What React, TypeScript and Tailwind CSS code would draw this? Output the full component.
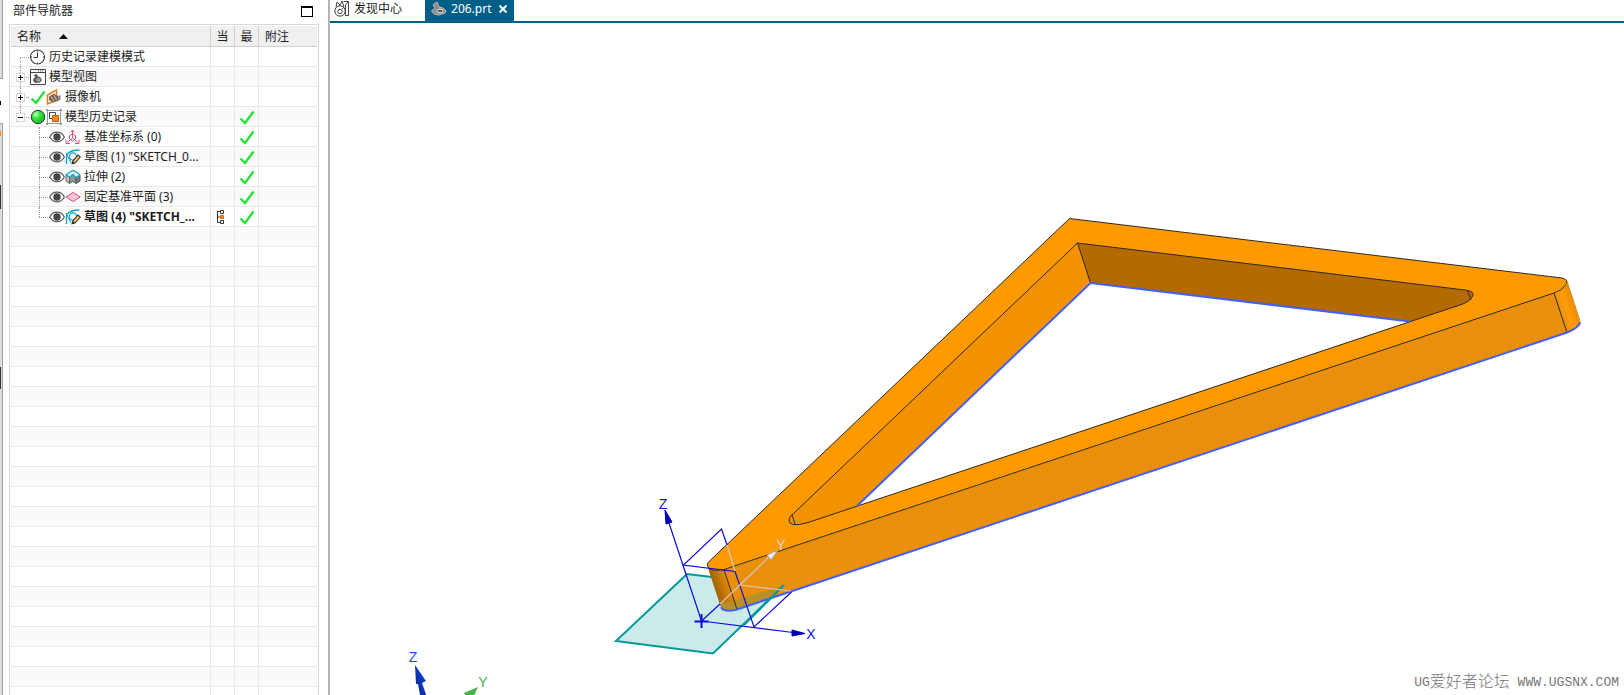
import { ReactNode } from 'react';

type Row = {
  label: string;
  level: number;
  icons: ReactNode[];
  expander?: '+' | '-';
  first?: boolean;
  last?: boolean;
  bold?: boolean;
  current?: boolean;
  checked?: boolean;
};

const IconCheck = () => (
  <svg width="16" height="16" viewBox="0 0 16 16" fill="none">
    <path d="M1.5 9.5L6 14L14.5 2.5" stroke="#22e32f" strokeWidth="2.3" />
  </svg>
);

const IconClock = () => (
  <svg width="16" height="16" viewBox="0 0 16 16" fill="none">
    <circle cx="7.5" cy="8" r="7" fill="#fff" stroke="#444" strokeWidth="1.1" />
    <path
      d="M7.5 3.5V8.5H3.5M7.5 1.5V2.5M7.5 13.5V14.5M13 8H14M1 8H2"
      stroke="#333"
    />
  </svg>
);

const IconModelView = () => (
  <svg width="16" height="16" viewBox="0 0 16 16" fill="none">
    <path d="M0.5 0.5H15.5V15.5H0.5Z" fill="#fff" stroke="#444" />
    <path d="M0 3.5H16" stroke="#444" />
    <path d="M8 2H14" stroke="#444" strokeDasharray="1 1" />
    <path
      d="M4 6L7 5L8 7.5L10 8L12 11L10 13.5L5.5 14L3 12L3.5 9.5L5 8.5Z"
      fill="#5c5c5c"
    />
    <ellipse cx="8.3" cy="10.8" rx="1.6" ry="1.1" stroke="#d5d5d5" />
  </svg>
);

const IconCamera = () => (
  <svg width="16" height="16" viewBox="0 0 16 16" fill="none">
    <path d="M1.5 6L10.5 1V11L1.5 15Z" fill="#fff" stroke="#ee7a1c" strokeWidth="1.5" />
    <path d="M3 7.5L8 4.5L12 7L13 11.5L7 13.5L3 11Z" fill="#7a6455" />
    <path d="M12 7L14.5 6V11L12.5 11.5Z" fill="#8a8a8a" />
    <path d="M5 7.5L8 12M8 6L10.5 11" stroke="#dcc6b4" />
  </svg>
);

const IconBall = () => (
  <svg width="16" height="16" viewBox="0 0 16 16">
    <defs>
      <radialGradient id="ball" cx="0.35" cy="0.3" r="0.75">
        <stop offset="0" stopColor="#c9ffcb" />
        <stop offset="0.4" stopColor="#37e63f" />
        <stop offset="1" stopColor="#11b51c" />
      </radialGradient>
    </defs>
    <circle cx="8" cy="8" r="6.7" fill="url(#ball)" stroke="#333" />
  </svg>
);

const IconHistory = () => (
  <svg width="16" height="16" viewBox="0 0 16 16" fill="none">
    <path d="M1.5 1.5H14.5V14.5H1.5Z" fill="#fff" stroke="#999" />
    <path
      d="M0 0H2V2H0ZM14 0H16V2H14ZM0 14H2V16H0ZM14 14H16V16H14Z"
      fill="#999"
    />
    <path d="M3.5 3.5H9.5V9.5H3.5Z" fill="#fff" stroke="#444" />
    <path d="M6.5 6.5H12.5V12.5H6.5Z" fill="#f58a1f" stroke="#c2570a" />
  </svg>
);

const IconEye = () => (
  <svg width="16" height="16" viewBox="0 0 16 16" fill="none">
    <path
      d="M0.7 8C4 1.6 12 1.6 15.3 8C12 14.4 4 14.4 0.7 8Z"
      fill="#fff"
      stroke="#555"
      strokeWidth="1.2"
    />
    <circle cx="8" cy="8" r="3.7" fill="#444" />
  </svg>
);

const IconCsys = () => (
  <svg width="16" height="16" viewBox="0 0 16 16" fill="none" stroke="#d6517d">
    <path d="M7.5 2V9L2 13.5M7.5 9L13 13.5" />
    <path d="M5.5 3.5L7.5 1L9.5 3.5M1 10.5V14.5H5M14 10.5V14.5H10" />
    <path d="M4.5 10V6.5L7.5 5L10.5 6.5V10L7.5 12Z" />
  </svg>
);

const IconSketch = () => (
  <svg width="16" height="16" viewBox="0 0 16 16" fill="none">
    <path d="M1.5 15V6C4 2 9 1 14.5 1" stroke="#13a5c9" strokeWidth="1.3" />
    <path d="M1 4L6 14" stroke="#13a5c9" />
    <circle cx="8" cy="7.5" r="3.6" stroke="#13a5c9" strokeWidth="1.3" />
    <path
      d="M7 14.8L8 11.8L13 6L15.3 8L10 14Z"
      fill="#f5c76d"
      stroke="#333"
      strokeWidth="1.1"
    />
    <path d="M7 14.8L8 12.3L9.5 13.8Z" fill="#222" />
  </svg>
);

const IconExtrude = () => (
  <svg width="16" height="16" viewBox="0 0 16 16" fill="none">
    <path d="M1 6V12L4.5 14.5V8Z" fill="#c4c7c9" stroke="#666" />
    <path d="M4.5 14.5V8L8 5.5L11 8.5V14.5L8 12.5Z" fill="#909598" stroke="#666" />
    <path d="M11 14.5V8.5L15 6.5V12Z" fill="#777c80" stroke="#555" />
    <path
      d="M1 6L4 3.5L8 1.5L12 3.5L15 6L11 8.5L8 5.5L4.5 8Z"
      fill="#dff3f8"
      stroke="#13a5c9"
      strokeWidth="1.2"
    />
  </svg>
);

const IconPlane = () => (
  <svg width="16" height="16" viewBox="0 0 16 16">
    <path d="M0.8 8L8 3.5L15.2 8L8 12.5Z" fill="#f7c6d4" stroke="#d6517d" />
  </svg>
);

const IconCurrent = () => (
  <svg width="16" height="16" viewBox="0 0 16 16" fill="none" stroke="#333">
    <path d="M5.5 2.5H2.5V13.5H5.5M2.5 8H5" />
    <path d="M5.5 1.5H8.5V4.5H5.5ZM5.5 11.5H8.5V14.5H5.5Z" fill="#fff" />
    <path d="M5.5 6.5H8.5V9.5H5.5Z" fill="#f58a1f" stroke="#d96a08" />
  </svg>
);

const IconDiscovery = () => (
  <svg width="16" height="16" viewBox="0 0 16 16" fill="none" stroke="#444">
    <circle cx="6" cy="10" r="5.2" />
    <circle cx="6" cy="10.5" r="2.2" />
    <path d="M2 6L3 1M10 6L8 0M3 1L6 4L8 0M6 4V5M8 8L10 6" />
    <path d="M9.5 0.5H14.5V14.5H11M14.5 0.5L11.5 4V14" />
  </svg>
);

const IconPart = () => (
  <svg width="16" height="16" viewBox="0 0 16 16" fill="none">
    <path
      d="M2 4L6 1L8 6L12 7L15 10L14 12L8 14L3 13L0.5 10L4 7Z"
      fill="#8c8c8c"
      stroke="#b9b9b9"
    />
    <ellipse cx="9" cy="10" rx="3.2" ry="1.8" fill="#555" stroke="#e4e4e4" />
  </svg>
);

const rows: Row[] = [
  { label: '历史记录建模模式', level: 0, icons: [<IconClock />], first: true },
  { label: '模型视图', level: 0, icons: [<IconModelView />], expander: '+' },
  {
    label: '摄像机',
    level: 0,
    icons: [<IconCheck />, <IconCamera />],
    expander: '+',
  },
  {
    label: '模型历史记录',
    level: 0,
    icons: [<IconBall />, <IconHistory />],
    expander: '-',
    last: true,
    checked: true,
  },
  {
    label: '基准坐标系 (0)',
    level: 1,
    icons: [<IconEye />, <IconCsys />],
    checked: true,
  },
  {
    label: '草图 (1) "SKETCH_0...',
    level: 1,
    icons: [<IconEye />, <IconSketch />],
    checked: true,
  },
  {
    label: '拉伸 (2)',
    level: 1,
    icons: [<IconEye />, <IconExtrude />],
    checked: true,
  },
  {
    label: '固定基准平面 (3)',
    level: 1,
    icons: [<IconEye />, <IconPlane />],
    checked: true,
  },
  {
    label: '草图 (4) "SKETCH_...',
    level: 1,
    icons: [<IconEye />, <IconSketch />],
    last: true,
    bold: true,
    current: true,
    checked: true,
  },
];

const emptyRows = Array.from({ length: 24 }, (_, i) => i);

// dotted connector in front of a tree item
const Branch = ({ row }: { row: Row }) => (
  <span
    className={`relative h-5 shrink-0 ${row.level ? 'ml-7 w-[10px]' : 'ml-[9px] w-[10px]'}`}
  >
    <span
      className={`absolute left-0 border-l border-dotted border-gray-400 ${
        row.first ? 'top-[10px] h-[10px]' : row.last ? 'top-0 h-[10px]' : 'top-0 h-5'
      }`}
    />
    <span className="absolute left-0 top-[10px] w-[9px] border-t border-dotted border-gray-400" />
    {row.expander && (
      <button
        aria-label={row.expander === '+' ? '展开' : '折叠'}
        className="absolute -left-1 top-[6px] flex h-[9px] w-[9px] items-center justify-center border border-gray-300 bg-white"
      >
        <svg width="5" height="5" viewBox="0 0 5 5" stroke="#000" className="shrink-0">
          <path d={row.expander === '+' ? 'M0 2.5H5M2.5 0V5' : 'M0 2.5H5'} />
        </svg>
      </button>
    )}
  </span>
);

const cell = 'h-5 border-b border-r border-[#e8e8e8] p-0';
const head = 'h-[21px] border-b border-r border-[#d0d0d0] p-0 pt-px font-normal';

const Navigator = () => (
  <section className="ml-[6px] flex w-[310px] shrink-0 flex-col">
    <div className="flex h-6 shrink-0 items-start justify-between pl-1 pr-[6px]">
      <h1 className="pt-[3px] text-xs leading-4">部件导航器</h1>
      <button
        aria-label="最大化"
        className="mt-[6px] h-[11px] w-[12px] border border-t-2 border-black"
      />
    </div>
    <div className="border border-[#d8d8d8] p-px">
      <table className="w-full table-fixed border-separate border-spacing-0 text-xs">
        <colgroup>
          <col />
          <col className="w-6" />
          <col className="w-6" />
          <col className="w-[58px]" />
        </colgroup>
        <thead className="bg-[#f0f0f0]">
          <tr>
            <th className={head}>
              <span className="flex items-center pl-[6px]">
                名称
                <svg width="9" height="5" viewBox="0 0 9 5" className="ml-[18px]">
                  <path d="M0 5L4.5 0L9 5Z" fill="#111" />
                </svg>
              </span>
            </th>
            <th className={head}>当</th>
            <th className={head}>最</th>
            <th className={`${head} border-r-0 pl-[6px] text-left`}>附注</th>
          </tr>
        </thead>
        <tbody>
          {rows.map((row) => (
            <tr key={row.label} className="even:bg-[#fafafa]">
              <td className={cell}>
                <div className="flex h-[19px] items-center overflow-visible whitespace-nowrap">
                  <Branch row={row} />
                  {row.icons.map((icon, i) => (
                    <span key={i} className="shrink-0">
                      {icon}
                    </span>
                  ))}
                  <span className={`ml-[3px] leading-4 ${row.bold ? 'font-bold' : ''}`}>
                    {row.label}
                  </span>
                </div>
              </td>
              <td className={cell}>
                <div className="flex justify-center">
                  {row.current && <IconCurrent />}
                </div>
              </td>
              <td className={cell}>
                <div className="flex justify-center">
                  {row.checked && <IconCheck />}
                </div>
              </td>
              <td className={`${cell} border-r-0`} />
            </tr>
          ))}
          {emptyRows.map((i) => (
            <tr key={i} className="even:bg-[#fafafa]">
              <td className={cell} />
              <td className={cell} />
              <td className={cell} />
              <td className={`${cell} border-r-0`} />
            </tr>
          ))}
        </tbody>
      </table>
    </div>
  </section>
);

const Scene = () => (
  <svg viewBox="330 23 1294 672" className="block h-auto w-full" fill="none">
    <defs>
      <linearGradient id="leftFillet" gradientUnits="userSpaceOnUse" x1="710" y1="592" x2="731" y2="585">
        <stop offset="0" stopColor="#7d4b00" />
        <stop offset="0.35" stopColor="#ad6904" />
        <stop offset="1" stopColor="#e88d0a" />
      </linearGradient>
      <linearGradient id="rightFillet" gradientUnits="userSpaceOnUse" x1="1560" y1="312" x2="1574" y2="307">
        <stop offset="0" stopColor="#ec900a" />
        <stop offset="0.5" stopColor="#ff9c0c" />
        <stop offset="1" stopColor="#ef9000" />
      </linearGradient>
      <linearGradient id="triadZ" gradientUnits="userSpaceOnUse" x1="414" y1="678" x2="426" y2="674">
        <stop offset="0" stopColor="#0a2c9c" />
        <stop offset="1" stopColor="#1246e0" />
      </linearGradient>
    </defs>

    {/* datum plane */}
    <path d="M687 574L616 641L713 653.5L783 586Z" fill="#cbebea" />
    <path d="M712 577L687 574L616 641L713 653.5L783 586" stroke="#009999" strokeWidth="2" />

    {/* side walls */}
    <path d="M724 569.5L1554 293L1567 332.5L737 609.5Z" fill="#ea8f0c" />
    <path
      d="M707.5 565L721 606Q724 613 737 609.5L724 569.5Q710 573 707.5 565Z"
      fill="url(#leftFillet)"
    />
    <path
      d="M1554 293Q1569 287 1567 281L1580 322Q1580 327 1567 332.5Z"
      fill="url(#rightFillet)"
    />
    <path
      d="M719 602Q729 604 742 598L783 586L770 598L737 609.5Q724 613 721 606Z"
      fill="#b79029"
    />

    {/* top face with the pocket */}
    <path
      d="M1069.5 218.5L1562 278Q1570 280 1565 286Q1562 290 1554 293L724 569.5Q706 573 707.5 563Z"
      fill="#ff9900"
    />
    <path
      d="M1077.5 243L1465 290Q1474 291 1473 295.5Q1470 302 1460 305L808 522.5Q789 528 789 520Q789 517 793 514Z"
      fill="#f39200"
    />
    <path
      d="M1077.5 243L1465 290Q1474 291 1473 295.5Q1470 302 1460 305L1410 321.5L1090.5 283Z"
      fill="#b36b00"
    />
    <path d="M1090.5 283L1410 321.5L857 506Z" fill="#fff" />

    <g stroke="#2e2a20" strokeWidth="1">
      <path d="M1554 293Q1562 290 1565 286Q1570 280 1562 278L1069.5 218.5L707.5 563Q706 573 724 569.5L1554 293L1567 332.5" />
      <path d="M1077.5 243L1465 290Q1474 291 1473 295.5Q1470 302 1460 305L808 522.5Q789 528 789 520Q789 517 793 514ZL1090.5 283" />
      <path d="M1467.5 290.5L1471 300M792 514.5L795 524" />
      <path d="M724 569.5L737 609.5" />
    </g>
    <path d="M707.5 565L721 606" stroke="#9a6410" />
    <path d="M1567 281L1580 321" stroke="#c98a2a" />
    <path
      d="M1580 322Q1580 327 1567 332.5L737 609.5Q724 613 721 607M1410 321.5L1090.5 283L857 506"
      stroke="#4560f5"
      strokeWidth="2"
    />
    <path d="M744 625L783 586" stroke="#009999" strokeWidth="2" />
    <circle cx="783" cy="586" r="1.5" fill="#009999" />

    {/* work coordinate system */}
    <g stroke="#0b0bdc" strokeWidth="1.2">
      <path d="M701.5 621L668 520M701.5 621L793 632.5M701.5 621L720 604" />
      <path d="M727 545L721.5 529L683.5 565L735 571.5L754 627L791.5 592" />
      <path d="M694.5 621.5H708.5M701.5 614V628" strokeWidth="2" />
    </g>
    <path
      d="M720 604L768 558M727 545L735 571M740 585L791 591"
      stroke="#d3c9b8"
      strokeWidth="1.2"
    />
    <path d="M665 510L672 522L666 524Z" fill="#0000b8" stroke="#0000b8" />
    <path d="M805 633.5L792 630V636Z" fill="#0000b8" stroke="#0000b8" />
    <path d="M778 550L767 555L771 560Z" fill="#ececec" stroke="#a8a8a8" />
    <g
      fontFamily="'Liberation Sans', Arial, sans-serif"
      fontSize="14"
      textAnchor="middle"
    >
      <text x="663" y="509" fill="#1111dd">Z</text>
      <text x="811" y="639" fill="#1111dd">X</text>
      <text x="781" y="550" fill="#d8d8d8">Y</text>
      <text x="413" y="662" fill="#1a4af0">Z</text>
      <text x="483" y="687" fill="#3cb043">Y</text>
    </g>

    {/* view triad, cut off by the window edge */}
    <path d="M415 665L426 681L422 683L428 700H421L418 684H416Z" fill="url(#triadZ)" />
    <path d="M478 687L464 693L468 700H472Z" fill="#43b649" />
  </svg>
);

const App = () => {
  return (
    <div className="flex h-screen overflow-hidden bg-white font-['Noto_Sans','Noto_Sans_CJK_SC',sans-serif] text-[#1c1c1c]">
      {/* edge of the docked resource bar */}
      <div className="flex w-[3px] shrink-0 flex-col">
        <div className="h-[79px] shrink-0 border-b border-r border-[#a0a0a0] bg-[#dcdcdc]" />
        <div className="flex h-11 shrink-0 items-center">
          <span className="mt-1 h-1 w-px bg-black" />
        </div>
        <div className="flex-1 border-r border-t border-[#a0a0a0] bg-[#dcdcdc]">
          <div className="mt-[7px] h-[5px] w-px bg-orange-400" />
          <div className="mt-[49px] h-6 w-px bg-[#333]" />
          <div className="mt-[158px] h-[22px] w-px bg-[#333]" />
        </div>
      </div>
      <Navigator />
      <main className="relative ml-[9px] min-w-0 flex-1 border-l-2 border-[#b4b4b4]">
        <nav className="flex h-[23px] border-b-2 border-[#005f87] text-xs">
          <a href="#discovery" className="flex items-center gap-1 pb-1 pl-1 pr-[23px]">
            <IconDiscovery />
            发现中心
          </a>
          <div className="flex items-center bg-[#005f87] pb-1 pl-[6px] pr-[7px] text-white">
            <a href="#part" className="flex items-center gap-1">
              <IconPart />
              206.prt
            </a>
            <button aria-label="关闭" className="ml-[7px]">
              <svg width="8" height="8" viewBox="0 0 8 8">
                <path d="M0.5 0.5L7.5 7.5M7.5 0.5L0.5 7.5" stroke="#fff" strokeWidth="2" />
              </svg>
            </button>
          </div>
        </nav>
        <Scene />
        <p className="absolute bottom-1 right-[5px] flex items-center whitespace-pre font-['Liberation_Mono','Noto_Sans_CJK_SC',monospace] text-[13px] leading-4 text-[#777]">
          UG<span className="text-base leading-4 font-light">爱好者论坛</span> WWW.UGSNX.COM
        </p>
      </main>
    </div>
  );
};

export default App;
